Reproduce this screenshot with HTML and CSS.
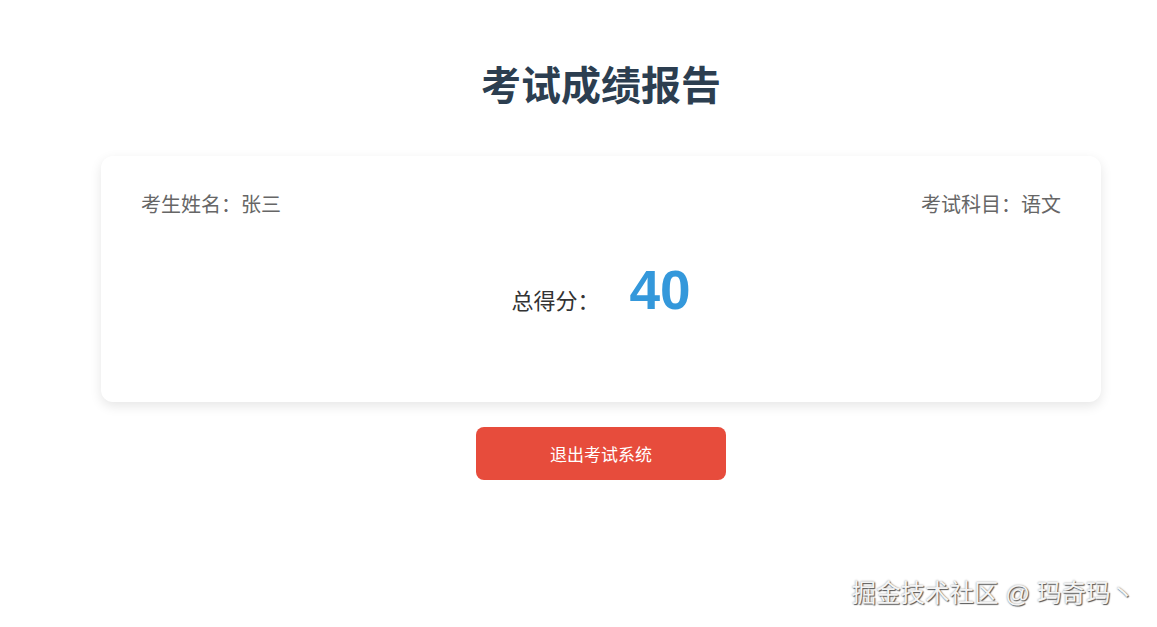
FILE: index.html
```html
<!DOCTYPE html>
<html lang="zh-CN">
<head>
    <meta charset="UTF-8">
    <meta name="viewport" content="width=device-width, initial-scale=1.0">
    <title>考试成绩报告</title>
    <link rel="stylesheet" href="styles.css">
</head>
<body>
    <div class="container">
        <h1 class="title">考试成绩报告</h1>
        <div class="report-card">
            <div class="info-row">
                <span class="info-item">考生姓名：张三</span>
                <span class="info-item">考试科目：语文</span>
            </div>
            <div class="score-row">
                <span class="score-label">总得分：</span>
                <span class="score-value">40</span>
            </div>
        </div>
        <div class="actions">
            <button class="exit-btn">退出考试系统</button>
        </div>
    </div>
    <div class="watermark">掘金技术社区 @ 玛奇玛丶</div>
</body>
</html>
```

FILE: styles.css
```css
body {
    margin: 0;
    font-family: "Liberation Sans", "Noto Sans CJK SC", sans-serif;
    background: #fff;
}
.container {
    width: 1000px;
    margin-left: 101px;
    padding-top: 56px;
}
.title {
    margin: 0 0 40px;
    text-align: center;
    font-size: 40px;
    line-height: 60px;
    font-weight: bold;
    color: #2c3e50;
}
.report-card {
    background: #fff;
    border-radius: 12px;
    box-shadow: 0 4px 12px rgba(0, 0, 0, 0.1);
    padding: 35px 40px 80px;
}
.info-row {
    display: flex;
    justify-content: space-between;
    font-size: 20px;
    line-height: 28px;
    color: #666;
}
.score-row {
    display: flex;
    justify-content: center;
    align-items: baseline;
    margin-top: 39px;
}
.score-label {
    font-size: 22px;
    color: #333;
}
.score-value {
    margin-left: 30px;
    font-size: 55px;
    font-weight: bold;
    color: #3498db;
}
.actions {
    display: flex;
    justify-content: center;
    margin-top: 25px;
}
.exit-btn {
    width: 250px;
    height: 53px;
    border: none;
    border-radius: 8px;
    background: #e74c3c;
    color: #fff;
    font-family: inherit;
    font-size: 17px;
    cursor: pointer;
}
.watermark {
    position: absolute;
    right: 22px;
    bottom: 18px;
    font-size: 24.5px;
    color: #f4f4f4;
    text-shadow: 1px 1px 1px #555, 0 0 2px #999;
}
```
